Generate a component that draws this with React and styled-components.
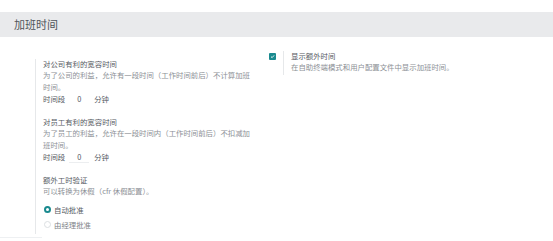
import React from 'react'
import styled, { createGlobalStyle } from 'styled-components'

const GlobalStyle = createGlobalStyle`
  body {
    margin: 0;
    background: #fff;
    font-family: "Noto Sans CJK SC", "Noto Sans", sans-serif;
    color: #4a4f55;
  }
`

const Page = styled.div`
  padding-top: 12px;
`

const Header = styled.div`
  height: 25px;
  line-height: 25px;
  background: #e9eaec;
  padding-left: 14px;
  font-size: 11px;
  color: #50545a;
`

const Grid = styled.div`
  display: grid;
  grid-template-columns: 248px 248px;
  align-items: start;
  padding-left: 14px;
  margin-top: 14px;
`

const Box = styled.div`
  display: flex;
  margin-top: ${p => p.offset || 0}px;
`

const LeftPane = styled.div`
  width: 21px;
  flex: none;
  display: flex;
  justify-content: center;
  padding-top: 2px;
`

const RightPane = styled.div`
  border-left: 1px solid #e6e8ea;
  padding: 0 7px 2px 7px;
  width: 212px;
  flex: none;
`

const Block = styled.div`
  & + & {
    margin-top: 12px;
  }
`

const Title = styled.div`
  font-size: 7.4px;
  line-height: 10px;
  color: #55595f;
`

const Desc = styled.div`
  font-size: 7.4px;
  line-height: 12px;
  color: #8c9096;
`

const Row = styled.div`
  display: flex;
  align-items: center;
  font-size: 7.4px;
  line-height: 12px;
  color: #55595f;
`

const NumInput = styled.span`
  width: 20px;
  margin: 0 5px 0 4px;
  text-align: center;
  border-bottom: 1px solid ${p => (p.underline ? '#eceef0' : 'transparent')};
  line-height: 11px;
`

const Check = styled.span`
  width: 7px;
  height: 7px;
  border-radius: 1px;
  background: #1a8a8f;
  display: flex;
  align-items: center;
  justify-content: center;
`

const RadioGroup = styled.div`
  margin-top: 5px;
`

const RadioRow = styled.div`
  display: flex;
  align-items: center;
  height: 15px;
  font-size: 7.4px;
  color: ${p => (p.checked ? '#55595f' : '#7d8288')};
`

const RadioDot = styled.span`
  width: 7px;
  height: 7px;
  box-sizing: border-box;
  border-radius: 50%;
  margin: 0 3px 0 1px;
  border: ${p => (p.checked ? '2px solid #1a8a8f' : '1px solid #dcdfe2')};
  background: #fff;
`

const Footer = styled.div`
  width: 42px;
  border-top: 1px solid #eef0f2;
  margin-top: 3px;
`

export default function App() {
  return (
    <Page>
      <GlobalStyle />
      <Header>加班时间</Header>
      <Grid>
        <Box offset={8}>
          <LeftPane />
          <RightPane>
            <Block>
              <Title>对公司有利的宽容时间</Title>
              <Desc>为了公司的利益，允许有一段时间（工作时间前后）不计算加班时间。</Desc>
              <Row>
                时间段<NumInput>0</NumInput>分钟
              </Row>
            </Block>
            <Block>
              <Title>对员工有利的宽容时间</Title>
              <Desc>为了员工的利益，允许在一段时间内（工作时间前后）不扣减加班时间。</Desc>
              <Row>
                时间段<NumInput underline>0</NumInput>分钟
              </Row>
            </Block>
            <Block>
              <Title>额外工时验证</Title>
              <Desc>可以转换为休假（cfr 休假配置）。</Desc>
              <RadioGroup>
                <RadioRow checked>
                  <RadioDot checked />
                  自动批准
                </RadioRow>
                <RadioRow>
                  <RadioDot />
                  由经理批准
                </RadioRow>
              </RadioGroup>
            </Block>
          </RightPane>
        </Box>
        <Box>
          <LeftPane>
            <Check>
              <svg width="5" height="5" viewBox="0 0 10 10">
                <path d="M2 5.2 L4.2 7.3 L8.2 2.8" fill="none" stroke="#fff" strokeWidth="1.8" />
              </svg>
            </Check>
          </LeftPane>
          <RightPane>
            <Title>显示额外时间</Title>
            <Desc>在自助终端模式和用户配置文件中显示加班时间。</Desc>
          </RightPane>
        </Box>
      </Grid>
      <Footer />
    </Page>
  )
}
